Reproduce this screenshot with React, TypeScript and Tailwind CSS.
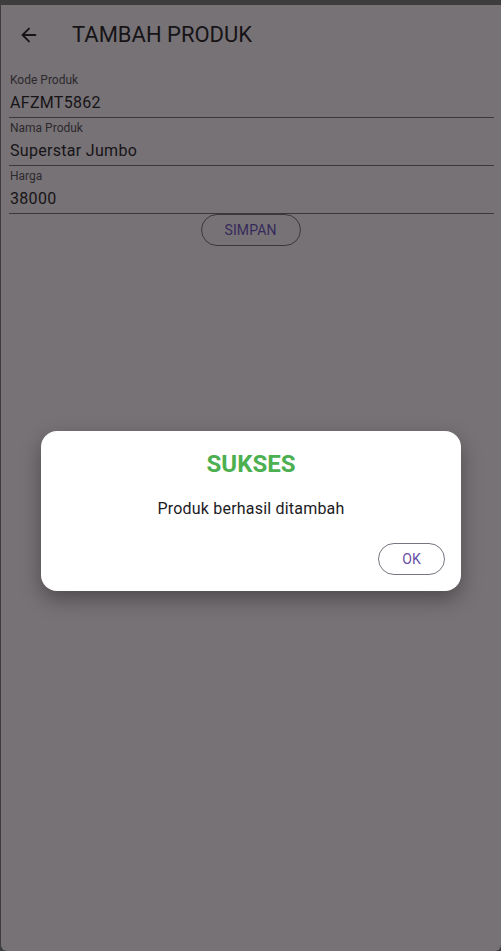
import { ArrowLeft } from "lucide-react";

const fields = [
	{ label: "Kode Produk", value: "AFZMT5862" },
	{ label: "Nama Produk", value: "Superstar Jumbo" },
	{ label: "Harga", value: "38000" },
];

function App() {
	return (
		<div className="w-[501px] h-[951px] bg-[#3d3d3d] pt-[5px] pl-[1px] font-['Roboto',sans-serif] overflow-hidden">
			<div className="relative h-[946px] bg-[#777276] rounded-b-[6px] overflow-hidden">
				{/* App bar */}
				<div className="h-[57px] pt-[2px] flex items-center">
					<ArrowLeft size={22} strokeWidth={2} className="ml-[17px] text-[#161416]" />
					<h1 className="ml-[32px] text-[22px] text-[#161416]">TAMBAH PRODUK</h1>
				</div>

				{/* Form */}
				<div className="px-[8px] pt-[8px] pr-[7px]">
					{fields.map((f) => (
						<div key={f.label} className="border-b border-[#3b383b] h-[48px] flex flex-col">
							<span className="mt-[3px] text-[12px] leading-[14px] text-[#2c292c] pl-px">{f.label}</span>
							<span className="text-[16px] leading-[20px] mt-[6px] text-[#161416] pl-px tracking-[0.3px]">{f.value}</span>
						</div>
					))}
					<div className="flex justify-center">
						<button className="-ml-[2px] w-[100px] h-[32px] rounded-full border border-[#3b383b] text-[14px] text-[#352b5a] tracking-[0.1px]">
							SIMPAN
						</button>
					</div>
				</div>

				{/* Dialog */}
				<div className="absolute left-[40px] top-[426px] w-[420px] h-[160px] bg-white rounded-[16px] shadow-[0_8px_20px_rgba(0,0,0,0.35)] flex flex-col items-center">
					<h2 className="mt-[15px] text-[24px] font-bold text-[#4caf50] leading-[36px]">SUKSES</h2>
					<p className="mt-[15px] text-[16px] text-[#1c1b1f] tracking-[0.2px]">Produk berhasil ditambah</p>
					<div className="self-end mt-[22px] mr-[16px]">
						<button className="w-[67px] h-[32px] rounded-full border border-[#79747e] text-[14px] text-[#6750a4]">
							OK
						</button>
					</div>
				</div>
			</div>
		</div>
	);
}

export default App;
